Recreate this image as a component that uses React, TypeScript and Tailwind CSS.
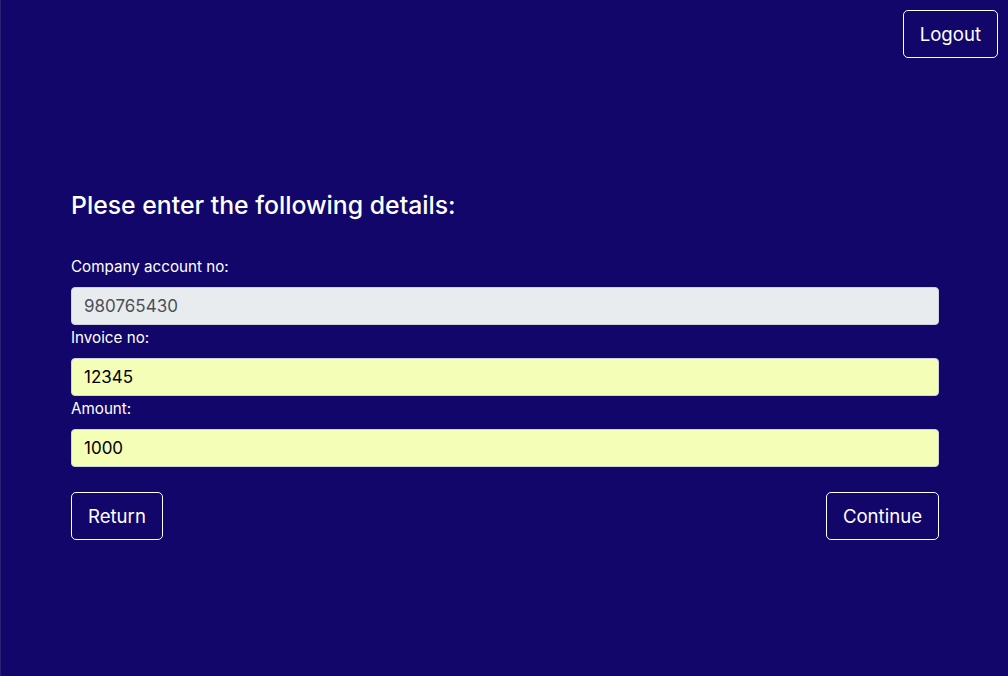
import React from "react";

export default function App() {
  const btn =
    "h-[48px] px-[16px] border border-white rounded-[5px] text-[18.6px] leading-[30px] text-white";
  return (
    <div
      className="min-h-[676px] w-full bg-[#12066b] text-white border-l border-[#2a2270]"
      style={{ fontFamily: "Inter, 'Noto Sans', sans-serif" }}
    >
      <div className="flex justify-end pt-[10px] pr-[10px]">
        <button className={btn}>Logout</button>
      </div>
      <div className="pl-[70px] pr-[69px] pt-[131px]">
        <h3 className="text-[24.8px] leading-[32px] font-medium mb-[34px]">Plese enter the following details:</h3>
        <div className="flex flex-col">
          <label className="text-[15.2px] leading-[24px] mb-[8px]">Company account no:</label>
          <input
            disabled
            defaultValue="980765430"
            className="h-[38px] w-full rounded-[4px] border border-[#ced4da] bg-[#e9ecef] px-[12px] text-[17px] text-[#495057] outline-none"
          />
          <label className="text-[15.2px] leading-[24px] mb-[8px] mt-[1px]">Invoice no:</label>
          <input
            defaultValue="12345"
            className="h-[38px] w-full rounded-[4px] border border-[#ced4da] bg-[#f4feb7] px-[12px] text-[17px] text-black outline-none"
          />
          <label className="text-[15.2px] leading-[24px] mb-[8px] mt-[1px]">Amount:</label>
          <input
            defaultValue="1000"
            className="h-[38px] w-full rounded-[4px] border border-[#ced4da] bg-[#f4feb7] px-[12px] text-[17px] text-black outline-none"
          />
        </div>
        <div className="flex justify-between mt-[25px]">
          <button className={btn}>Return</button>
          <button className={btn}>Continue</button>
        </div>
      </div>
    </div>
  );
}
